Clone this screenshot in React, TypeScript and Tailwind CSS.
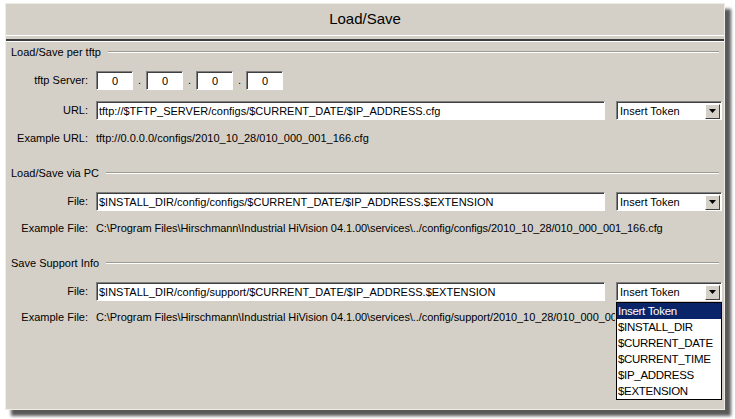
import React from 'react';

const tokens = ['Insert Token', '$INSTALL_DIR', '$CURRENT_DATE', '$CURRENT_TIME', '$IP_ADDRESS', '$EXTENSION'];

const sunken = 'border border-t-[#808080] border-l-[#808080] border-b-white border-r-white';

const SectionTitle: React.FC<{ title: string; className?: string }> = ({ title, className = '' }) => (
  <div className={`flex items-center h-[20px] pl-[5px] pr-[5px] ${className}`}>
    <span className="whitespace-nowrap">{title}</span>
    <div className="flex-1 ml-[7px] h-[2px] border-t border-t-[#9d9a93] border-b border-b-white"></div>
  </div>
);

const Label: React.FC<{ text: string }> = ({ text }) => (
  <div className="w-[81px] shrink-0 text-right">{text}</div>
);

const TextBox: React.FC<{ value: string }> = ({ value }) => (
  <div className={`w-[509px] h-[19px] bg-white ${sunken} flex items-center`}>
    <div className="w-full h-full border-t border-l border-t-[#404040] border-l-[#404040] pl-[1px] leading-[16px] whitespace-nowrap overflow-hidden text-black">
      {value}
    </div>
  </div>
);

const Combo: React.FC = () => (
  <div className={`ml-[3px] w-[106px] h-[19px] bg-white ${sunken}`}>
    <div className="w-full h-full border-t border-l border-t-[#404040] border-l-[#404040] flex items-center justify-between pl-[2px] pr-[1px]">
      <span className="leading-[16px] text-black">Insert Token</span>
      <div className="w-[15px] h-[15px] bg-[#d4d0c8] border border-t-white border-l-white border-b-[#404040] border-r-[#404040] flex items-center justify-center">
        <svg width="7" height="4" viewBox="0 0 7 4">
          <path d="M0 0h7L3.5 4z" fill="#000" />
        </svg>
      </div>
    </div>
  </div>
);

const IpBox: React.FC = () => (
  <div className={`w-[37px] h-[19px] bg-white ${sunken}`}>
    <div className="w-full h-full border-t border-l border-t-[#404040] border-l-[#404040] flex items-center justify-center leading-[16px] text-black">
      0
    </div>
  </div>
);

const Row: React.FC<{ className?: string; children: React.ReactNode }> = ({ className = '', children }) => (
  <div className={`flex items-center gap-[8px] pl-[1px] ${className}`}>{children}</div>
);

export default function App() {
  return (
    <div className="w-[735px] h-[419px] bg-white pt-[3px] pl-[5px] overflow-hidden">
      <div
        className="relative w-[720px] h-[407px] bg-[#d4d0c8] border border-[#f0ede6] shadow-[6px_6px_3px_rgba(0,0,0,0.65)] text-[11px] text-black"
        style={{ fontFamily: '"Liberation Sans", Arial, sans-serif' }}
      >
        <div className="h-[32px] flex items-center justify-center text-[15px] border-b border-b-white">Load/Save</div>
        <div className="mt-[3px] h-[2px] bg-[#3c3c3c]"></div>
        <div className="h-[1px] bg-white"></div>

        <SectionTitle title="Load/Save per tftp" />
        <Row className="mt-[9px] h-[19px]">
          <Label text="tftp Server:" />
          <div className="flex items-center">
            <IpBox />
            <span className="w-[13px] text-center">.</span>
            <IpBox />
            <span className="w-[13px] text-center">.</span>
            <IpBox />
            <span className="w-[13px] text-center">.</span>
            <IpBox />
          </div>
        </Row>
        <Row className="mt-[11px] h-[19px]">
          <Label text="URL:" />
          <TextBox value="tftp://$TFTP_SERVER/configs/$CURRENT_DATE/$IP_ADDRESS.cfg" />
          <Combo />
        </Row>
        <Row className="mt-[10px] h-[16px]">
          <Label text="Example URL:" />
          <span className="whitespace-nowrap">tftp://0.0.0.0/configs/2010_10_28/010_000_001_166.cfg</span>
        </Row>

        <SectionTitle title="Load/Save via PC" className="mt-[17px]" />
        <Row className="mt-[9px] h-[19px]">
          <Label text="File:" />
          <TextBox value="$INSTALL_DIR/config/configs/$CURRENT_DATE/$IP_ADDRESS.$EXTENSION" />
          <Combo />
        </Row>
        <Row className="mt-[9px] h-[16px]">
          <Label text="Example File:" />
          <span className="whitespace-nowrap tracking-[-0.07px]">
            C:\Program Files\Hirschmann\Industrial HiVision 04.1.00\services\../config/configs/2010_10_28/010_000_001_166.cfg
          </span>
        </Row>

        <SectionTitle title="Save Support Info" className="mt-[17px]" />
        <Row className="mt-[9px] h-[19px]">
          <Label text="File:" />
          <TextBox value="$INSTALL_DIR/config/support/$CURRENT_DATE/$IP_ADDRESS.$EXTENSION" />
          <Combo />
        </Row>
        <Row className="mt-[8px] h-[16px]">
          <Label text="Example File:" />
          <span className="w-[519px] overflow-hidden whitespace-nowrap tracking-[-0.07px]">
            C:\Program Files\Hirschmann\Industrial HiVision 04.1.00\services\../config/support/2010_10_28/010_000_001_166.cfg
          </span>
        </Row>

        {/* open token list */}
        <div className="absolute left-[610px] top-[298px] w-[106px] bg-white border border-black text-[11.5px] tracking-[-0.3px]">
          {tokens.map((t, i) => (
            <div
              key={t}
              className={`h-[16px] leading-[16px] pl-[1px] whitespace-nowrap ${i === 0 ? 'bg-[#0a246a] text-white' : 'text-black'}`}
            >
              {t}
            </div>
          ))}
        </div>
      </div>
    </div>
  );
}
